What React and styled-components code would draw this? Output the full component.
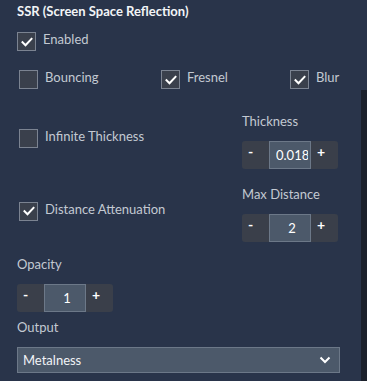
import React from 'react'
import styled, { createGlobalStyle } from 'styled-components'

const GlobalStyle = createGlobalStyle`
  html, body {
    margin: 0;
    padding: 0;
    background: #29344a;
  }
  body {
    font-family: 'Lato', 'Noto Sans', sans-serif;
  }
`

function CheckMark() {
  return (
    <svg width="12" height="10" viewBox="0 0 12 10">
      <path d="M1.5 5.2 L4.5 8.2 L10.5 1.8" fill="none" stroke="#ffffff" strokeWidth="2" strokeLinecap="square" />
    </svg>
  )
}

function Check({ label, checked, lift }) {
  return (
    <CheckRow lift={lift}>
      <Box>{checked && <CheckMark />}</Box>
      <CheckLabel>{label}</CheckLabel>
    </CheckRow>
  )
}

function Stepper({ value }) {
  return (
    <StepperWrap>
      <StepButton>-</StepButton>
      <StepInput value={value} readOnly />
      <StepButton>+</StepButton>
    </StepperWrap>
  )
}

function App() {
  return (
    <Page>
      <GlobalStyle />
      <Panel>
        <Title>SSR (Screen Space Reflection)</Title>
        <EnabledRow>
          <Check label="Enabled" checked />
        </EnabledRow>

        <TripleRow>
          <Check label="Bouncing" />
          <Check label="Fresnel" checked />
          <Check label="Blur" checked />
        </TripleRow>

        <SplitRow top={24}>
          <Check label="Infinite Thickness" lift={6} />
          <Field>
            <FieldLabel>Thickness</FieldLabel>
            <Stepper value="0.018" />
          </Field>
        </SplitRow>

        <SplitRow top={17}>
          <Check label="Distance Attenuation" checked lift={6} />
          <Field>
            <FieldLabel>Max Distance</FieldLabel>
            <Stepper value="2" />
          </Field>
        </SplitRow>

        <Field top={14}>
          <FieldLabel>Opacity</FieldLabel>
          <Stepper value="1" />
        </Field>

        <Field top={7}>
          <FieldLabel>Output</FieldLabel>
          <Select>
            <span>Metalness</span>
            <svg width="12" height="8" viewBox="0 0 12 8">
              <path d="M1.5 1.5 L6 6 L10.5 1.5" fill="none" stroke="#ffffff" strokeWidth="2" />
            </svg>
          </Select>
        </Field>
      </Panel>
      <Scrollbar />
    </Page>
  )
}

export default App

const Page = styled.div`
  display: flex;
  width: 367px;
  height: 381px;
  overflow: hidden;
  background: #29344a;
`

const Panel = styled.div`
  width: 361px;
  padding: 3px 0 0 17px;
  box-sizing: border-box;
  display: flex;
  flex-direction: column;
`

const Scrollbar = styled.div`
  width: 6px;
  margin-top: 90px;
  background: #1b202b;
`

const Title = styled.div`
  color: #f2f4f7;
  font-weight: 700;
  font-size: 13px;
  line-height: 17px;
`

const EnabledRow = styled.div`
  margin-top: 12px;
`

const TripleRow = styled.div`
  margin-top: 19px;
  padding-left: 2px;
  display: grid;
  grid-template-columns: 142px 129px 1fr;
`

const SplitRow = styled.div`
  margin-top: ${props => props.top}px;
  padding-left: 2px;
  display: grid;
  grid-template-columns: 223px 1fr;
  align-items: center;
`

const CheckRow = styled.div`
  display: flex;
  align-items: flex-start;
  gap: 7px;
  margin-bottom: ${props => props.lift || 0}px;
`

const Box = styled.div`
  width: 17px;
  height: 17px;
  border: 1px solid #7b8391;
  background: #3a404c;
  display: flex;
  align-items: center;
  justify-content: center;
`

const CheckLabel = styled.span`
  color: #c3c9d2;
  font-size: 13px;
  line-height: 16px;
  margin-top: -1px;
`

const Field = styled.div`
  margin-top: ${props => props.top || 0}px;
  display: flex;
  flex-direction: column;
  gap: 12px;
`

const FieldLabel = styled.div`
  color: #c3c9d2;
  font-size: 13px;
  line-height: 16px;
`

const StepperWrap = styled.div`
  display: flex;
  width: 96px;
  height: 28px;
  background: #3a3f4a;
  border-radius: 3px;
`

const StepButton = styled.div`
  width: 27px;
  box-sizing: border-box;
  padding-left: 6px;
  color: #ffffff;
  font-weight: 700;
  font-size: 14px;
  line-height: 21px;
  user-select: none;
`

const StepInput = styled.input`
  width: 42px;
  height: 28px;
  box-sizing: border-box;
  padding: 0 2px 0 6px;
  border: 1px solid #6c7888;
  background: #4c596a;
  color: #ffffff;
  font-family: 'Lato', 'Noto Sans', sans-serif;
  font-size: 13px;
  text-align: center;
  outline: none;
`

const Select = styled.div`
  width: 323px;
  height: 26px;
  box-sizing: border-box;
  border: 1px solid #6c7888;
  background: #4c596a;
  display: flex;
  align-items: center;
  justify-content: space-between;
  padding: 0 8px 0 5px;
  color: #f2f4f7;
  font-size: 13px;
`
